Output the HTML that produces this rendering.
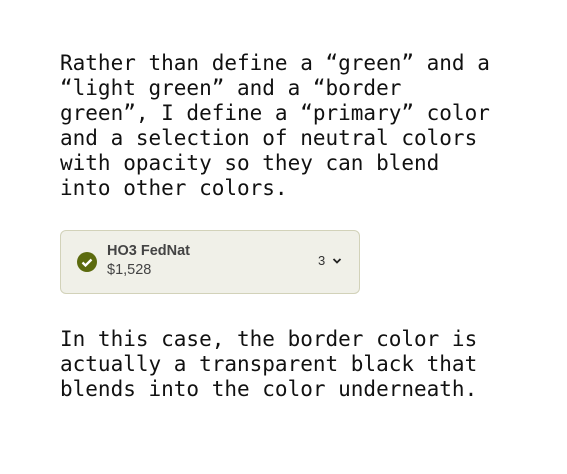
<!DOCTYPE html>
<html><head><style>
body{margin:0;background:#fff;width:567px;height:474px;overflow:hidden}
p{position:absolute;left:60px;margin:0;font-family:"DejaVu Sans Mono",monospace;font-size:21px;line-height:25px;color:#111;white-space:pre}
.card{position:absolute;left:60px;top:230px;width:300px;height:64px;box-sizing:border-box;background:#f0f0e8;border:1px solid rgba(90,90,0,0.2);border-radius:6px;font-family:"Liberation Sans",sans-serif}
.chk{position:absolute;left:16px;top:21px;width:20px;height:20px;border-radius:50%;background:#5c6b0e}
.t{position:absolute;left:46px;top:12px;font-size:14.5px;font-weight:bold;color:#444}
.pr{position:absolute;left:46px;top:31px;font-size:14.5px;color:#444}
.n{position:absolute;left:257px;top:22px;font-size:13px;color:#333}
</style></head><body>
<p style="top:51px">Rather than define a “green” and a
“light green” and a “border
green”, I define a “primary” color
and a selection of neutral colors
with opacity so they can blend
into other colors.</p>
<div class="card">
<div class="chk"><svg width="20" height="20"><path d="M5.5 10.5l3 3 6-6" stroke="#fff" stroke-width="2.3" fill="none"/></svg></div>
<div class="t">HO3 FedNat</div>
<div class="pr">$1,528</div>
<div class="n">3</div>
<svg style="position:absolute;left:271px;top:26px" width="10" height="8"><path d="M1.5 2l3.5 3.5 3.5-3.5" stroke="#222" stroke-width="1.8" fill="none"/></svg>
</div>
<p style="top:327px">In this case, the border color is
actually a transparent black that
blends into the color underneath.</p>
</body></html>
